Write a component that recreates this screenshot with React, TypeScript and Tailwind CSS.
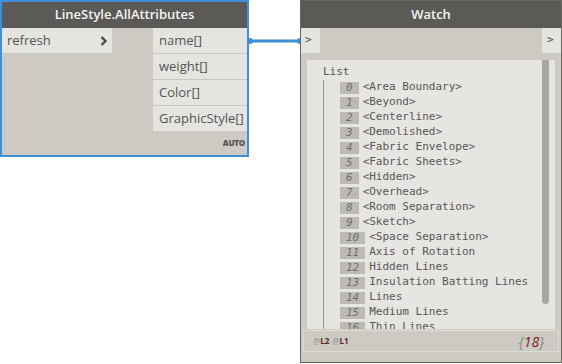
import React from "react";

const items: string[] = [
  "<Area Boundary>",
  "<Beyond>",
  "<Centerline>",
  "<Demolished>",
  "<Fabric Envelope>",
  "<Fabric Sheets>",
  "<Hidden>",
  "<Overhead>",
  "<Room Separation>",
  "<Sketch>",
  "<Space Separation>",
  "Axis of Rotation",
  "Hidden Lines",
  "Insulation Batting Lines",
  "Lines",
  "Medium Lines",
  "Thin Lines",
];

const sans = { fontFamily: '"Open Sans", "Noto Sans", sans-serif' };
const mono = { fontFamily: '"DejaVu Sans Mono", "Liberation Mono", monospace' };

function Chevron() {
  return (
    <svg width="8" height="10" viewBox="0 0 8 10">
      <path d="M1.5 1 L5.5 5 L1.5 9" stroke="#4a4a4a" strokeWidth="2.4" fill="none" />
    </svg>
  );
}

export default function App() {
  return (
    <div className="relative w-[562px] h-[364px] bg-white overflow-hidden" style={sans}>
      {/* Left node */}
      <div className="absolute left-0 top-0 w-[249px] h-[157px] border-2 border-[#3f8fd9] bg-[#cdc9c3] flex flex-col">
        <div className="h-[26px] bg-[#5c5a57] text-[#f4f4f4] text-[13px] font-semibold flex items-center justify-center shrink-0">
          LineStyle.AllAttributes
        </div>
        <div className="flex justify-between">
          <div className="w-[110px] h-[25px] bg-[#e5e4e0] flex items-center justify-between pl-[5px] pr-[4px] text-[13px] text-[#555]">
            <span>refresh</span>
            <Chevron />
          </div>
          <div className="w-[94px] flex flex-col text-[13px] text-[#555]">
            {["name[]", "weight[]", "Color[]", "GraphicStyle[]"].map((t, i) => (
              <div
                key={t}
                className={
                  "bg-[#e5e4e0] flex items-center pl-[6px] " +
                  (i < 3 ? "h-[26px] border-b border-[#c9c6c1]" : "h-[25px]")
                }
              >
                {t}
              </div>
            ))}
          </div>
        </div>
        <div className="flex-1 flex items-center justify-end pr-[2px]">
          <span className="text-[8px] font-extrabold text-[#555] tracking-tight">AUTO</span>
        </div>
      </div>

      {/* Connector */}
      <svg className="absolute left-[246px] top-[36px]" width="58" height="10" viewBox="0 0 58 10">
        <line x1="3" y1="5" x2="55" y2="5" stroke="#3f8fd9" strokeWidth="3" />
        <circle cx="4" cy="5" r="3" fill="#3f8fd9" />
        <circle cx="54" cy="5" r="3" fill="#3f8fd9" />
      </svg>

      {/* Watch node */}
      <div className="absolute left-[300px] top-0 w-[262px] h-[363px] border border-[#6a6763] bg-[#cdc9c3] flex flex-col">
        <div className="h-[27px] bg-[#5c5a57] text-[#f4f4f4] text-[13px] font-semibold flex items-center justify-center shrink-0">
          Watch
        </div>
        <div className="flex justify-between h-[25px] shrink-0">
          <div className="w-[19px] bg-[#e5e4e0] flex items-center pl-[4px] text-[11px] text-[#444]" style={mono}>
            &gt;
          </div>
          <div className="w-[19px] bg-[#e5e4e0] flex items-center pl-[5px] text-[11px] text-[#444]" style={mono}>
            &gt;
          </div>
        </div>
        <div className="mt-[7px] mx-[6px] h-[269px] bg-[#e6e5e1] relative overflow-hidden text-[11px] text-[#575757]" style={mono}>
          <div className="absolute right-[6px] top-0 w-[7px] h-[244px] rounded-b-full rounded-t-sm bg-[#aaa8a4]" />
          <div className="pt-[5px] pl-[16px]">
            <div className="h-[15px] flex items-center">List</div>
            <div className="border-l border-[#9a9895] pl-[16px]">
              {items.map((t, i) => (
                <div key={i} className="h-[15px] flex items-center">
                  <span className="h-[12px] bg-[#bdbab6] text-[#707070] italic pl-[6px] pr-[6px] flex items-center leading-none">
                    {i}
                  </span>
                  <span className="ml-[4px] whitespace-pre">{t}</span>
                </div>
              ))}
            </div>
          </div>
        </div>
        <div className="mt-[1px] mx-[2px] h-[22px] border border-[#dedcd8] flex items-center justify-between pl-[9px] pr-[14px]">
          <span className="text-[8px] font-bold flex gap-[3px]">
            <span>
              <span className="text-[#a9a7a3]">@</span>
              <span className="text-[#5a2a2a]">L2</span>
            </span>
            <span>
              <span className="text-[#a9a7a3]">@</span>
              <span className="text-[#5a2a2a]">L1</span>
            </span>
          </span>
          <span className="text-[14px] italic" style={sans}>
            <span className="text-[#8a8a8a]">{"{"}</span>
            <span className="text-[#7a1c1c]">18</span>
            <span className="text-[#8a8a8a]">{"}"}</span>
          </span>
        </div>
      </div>
    </div>
  );
}
